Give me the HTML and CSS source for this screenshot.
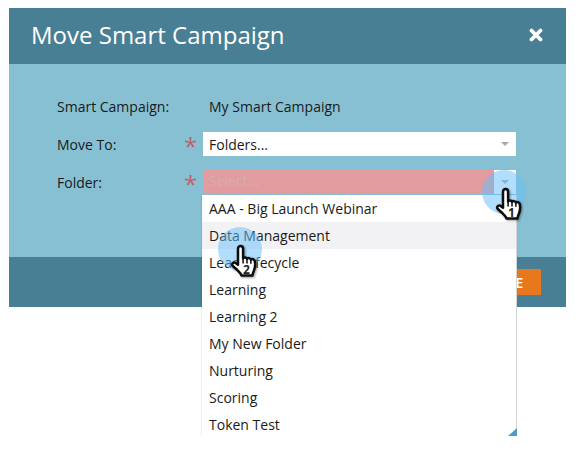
FILE: index.html
```html
<!doctype html>
<html>
<head>
    <meta charset="UTF-8">
    <title>Move Smart Campaign</title>
    <link rel="stylesheet" href="styles.css">
</head>
<body>
<svg width="0" height="0" class="defs">
    <symbol id="hand" viewBox="0 0 30 38">
        <path d="M10.500 2c1.500 0 2.600 1.200 2.600 2.900v9.600c.5-1.300 3.300-1.400 3.900.4.700-1.200 3.400-1.100 3.900.7.900-.9 3.400-.6 3.800 1.300.8 3.200.4 6.500-.6 9.300-.7 2-1.500 3-1.600 5.300H11.500c-.6-2.400-2.400-3.700-4.500-5.800L2.800 22c-1.700-1.900.5-4.500 2.900-3l2.300 1.800V4.900C8 3.200 9 2 10.500 2z" fill="#fff" stroke="#0d0d0d" stroke-width="2.500" stroke-linejoin="round"/>
        <path d="M13.100 14.500v4.500M17 15.500v3.500M20.900 16.500v2.800" fill="none" stroke="#0d0d0d" stroke-width="1.500" stroke-linecap="round"/>
    </symbol>
</svg>
<div class="dialog">
    <div class="dialog-head">
        <h1>Move Smart Campaign</h1>
        <svg class="close" width="14" height="14" viewBox="0 0 14 14"><path d="M2.500 2.500l9 9M11.500 2.500l-9 9" stroke="#fff" stroke-width="3.800" stroke-linecap="round"/></svg>
    </div>
    <div class="dialog-body">
        <div class="row">
            <span class="label">Smart Campaign:</span>
            <span class="req"></span>
            <span class="value">My Smart Campaign</span>
        </div>
        <div class="row">
            <span class="label">Move To:</span>
            <span class="req">*</span>
            <div class="select"><span class="select-value">Folders...</span><i class="arrow"></i></div>
        </div>
        <div class="row">
            <span class="label">Folder:</span>
            <span class="req">*</span>
            <div class="select invalid"><span class="select-text">Select...</span><span class="trigger"><i class="arrow"></i></span></div>
        </div>
    </div>
    <div class="dialog-foot">
        <button class="move">MOVE</button>
    </div>
</div>
<ul class="menu">
    <li>AAA - Big Launch Webinar</li>
    <li class="hover">Data Management</li>
    <li>Lead Lifecycle</li>
    <li>Learning</li>
    <li>Learning 2</li>
    <li>My New Folder</li>
    <li>Nurturing</li>
    <li>Scoring</li>
    <li>Token Test</li>
</ul>
<div class="grip"></div>
<div class="spot spot-1"></div>
<div class="spot spot-2"></div>
<div class="cursor cursor-1"><svg width="30" height="38"><use href="#hand"/></svg><b>1</b></div>
<div class="cursor cursor-2"><svg width="30" height="38"><use href="#hand"/></svg><b>2</b></div>
</body>
</html>
```
FILE: styles.css
```css
* {
    margin: 0;
    padding: 0;
    box-sizing: border-box;
}

body {
    background: #fff;
    width: 576px;
    height: 457px;
    overflow: hidden;
    position: relative;
    font-family: "Open Sans", "Liberation Sans", sans-serif;
    font-size: 14px;
    color: #1a1a1a;
}

.defs {
    position: absolute;
}

.dialog {
    margin: 8px 9px 0;
    width: 557px;
}

.dialog-head {
    height: 56px;
    background: #487f94;
    display: flex;
    align-items: center;
    justify-content: space-between;
    padding: 0 23px 0 22px;
}

.dialog-head h1 {
    font-size: 24px;
    font-weight: 400;
    color: #fff;
    line-height: 56px;
    margin-top: -3px;
}

.close {
    margin-top: -3px;
}

.dialog-body {
    height: 193px;
    background: #88c0d3;
    padding: 30px 50px 0 48px;
    display: flex;
    flex-direction: column;
    gap: 14px;
}

.row {
    display: flex;
    align-items: center;
    height: 24px;
}

.label {
    width: 127px;
}

.req {
    width: 19px;
    color: #c0626a;
    font-size: 24px;
    line-height: 24px;
    height: 24px;
    padding-top: 2px;
}

.value {
    padding-left: 6px;
}

.select {
    width: 313px;
    height: 24px;
    background: #fff;
    line-height: 24px;
    padding-left: 6px;
    display: flex;
    justify-content: space-between;
    align-items: center;
    padding-right: 7px;
}

.select-value {
    margin-top: 1px;
}

.select.invalid {
    background: #e29c9f;
    padding-right: 0;
    padding-left: 0;
}

.select-text {
    color: #d3aeb1;
    padding-left: 6px;
    margin-top: -2px;
}

.trigger {
    width: 22px;
    height: 24px;
    background: #fff;
    display: flex;
    align-items: center;
    justify-content: center;
}

.arrow {
    display: block;
    width: 0;
    height: 0;
    border-left: 4px solid transparent;
    border-right: 4px solid transparent;
    border-top: 4px solid #a9a9a9;
}

.dialog-foot {
    height: 50px;
    background: #487f94;
    display: flex;
    justify-content: flex-end;
    padding: 12px 25px 0 0;
}

.move {
    width: 76px;
    height: 26px;
    background: #e8781e;
    border: 0;
    color: #fff;
    font-family: inherit;
    font-size: 14px;
    font-weight: 600;
}

.menu {
    position: absolute;
    left: 202px;
    top: 195px;
    width: 315px;
    height: 241px;
    background: #fff;
    list-style: none;
    border-right: 1px solid #d4d4d4;
    box-shadow: -1px 0 1px rgba(0, 0, 0, .06);
}

.menu li {
    height: 27px;
    line-height: 27px;
    padding-left: 7px;
}

.menu li.hover {
    background: #f2f2f4;
}

.grip {
    position: absolute;
    left: 508px;
    top: 428px;
    width: 9px;
    height: 8px;
    background: #4f9ac4;
    clip-path: polygon(100% 0, 100% 100%, 0 100%);
}

.spot {
    position: absolute;
    width: 44px;
    height: 44px;
    border-radius: 50%;
    background: rgba(100, 190, 250, .5);
}

.spot-1 {
    left: 482px;
    top: 170px;
}

.spot-2 {
    left: 218px;
    top: 227px;
}

.cursor {
    position: absolute;
    width: 30px;
    height: 38px;
}

.cursor svg {
    display: block;
    filter: drop-shadow(1px 1px 1px rgba(0, 0, 0, .4));
}

.cursor b {
    position: absolute;
    left: 13px;
    top: 19px;
    font-size: 12px;
    line-height: 13px;
    color: #222;
}

.cursor-1 {
    left: 495px;
    top: 187px;
}

.cursor-2 {
    left: 230px;
    top: 244px;
}
```
